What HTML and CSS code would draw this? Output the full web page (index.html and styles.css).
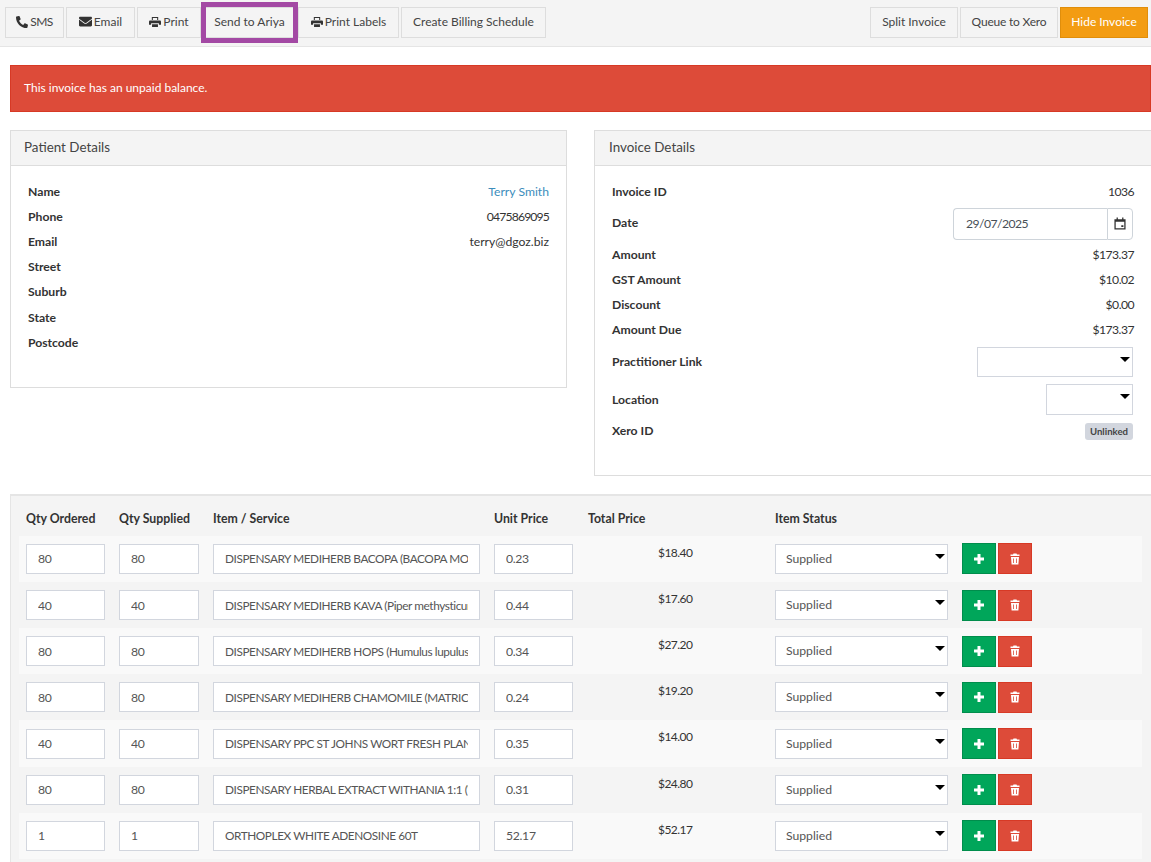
FILE: index.html
```html
<!DOCTYPE html>
<html lang="en">
<head>
<meta charset="utf-8">
<title>Invoice</title>
<link rel="stylesheet" href="styles.css">
</head>
<body>
<header class="toolbar">
  <div class="btn-group">
    <button class="btn w-59"><svg class="ico" viewBox="0 0 512 512"><path d="M18.6 24.6l104-24c11.3-2.6 22.9 3.3 27.5 13.9l48 112c4.2 9.8 1.4 21.3-6.9 28l-60.6 49.6c36 76.7 98.9 140.5 177.2 177.2l49.6-60.6c6.8-8.3 18.2-11.1 28-6.9l112 48c10.7 4.6 16.6 16.2 14 27.5l-24 104c-2.5 10.8-12.1 18.6-23.4 18.6C208 512 0 304.5 0 48c0-11.2 7.7-20.9 18.6-23.4z"/></svg>SMS</button>
    <button class="btn w-69"><svg class="ico ico-wide" viewBox="0 0 512 512"><path d="M502.3 190.8c3.9-3.1 9.7-.2 9.7 4.7V400c0 26.5-21.5 48-48 48H48c-26.5 0-48-21.5-48-48V195.6c0-5 5.7-7.8 9.7-4.7 22.4 17.4 52.1 39.5 154.1 113.6 21.1 15.4 56.7 47.8 92.2 47.6 35.7.3 72-32.8 92.3-47.6 102-74.1 131.600-96.3 154-113.700zM256 320c23.2.4 56.6-29.2 73.4-41.4 132.7-96.3 142.8-104.7 173.4-128.7 5.8-4.5 9.2-11.5 9.2-18.9v-19c0-26.5-21.5-48-48-48H48C21.5 64 0 85.5 0 112v19c0 7.4 3.4 14.3 9.2 18.9 30.6 23.9 40.7 32.4 173.4 128.7 16.8 12.2 50.2 41.8 73.4 41.4z"/></svg>Email</button>
    <button class="btn w-64"><svg class="ico" viewBox="0 0 512 512"><path d="M120 40h272v130h-44V84H164v86h-44zM50 190h412c28 0 50 22 50 50v130h-90v-60H90v60H0V240c0-28 22-50 50-50zM130 350h252v122H130z"/></svg>Print</button>
    <button class="btn btn-marked w-93">Send to Ariya</button>
    <button class="btn w-101"><svg class="ico" viewBox="0 0 512 512"><path d="M120 40h272v130h-44V84H164v86h-44zM50 190h412c28 0 50 22 50 50v130h-90v-60H90v60H0V240c0-28 22-50 50-50zM130 350h252v122H130z"/></svg>Print Labels</button>
    <button class="btn w-145">Create Billing Schedule</button>
  </div>
  <div class="btn-group">
    <button class="btn w-88">Split Invoice</button>
    <button class="btn w-98">Queue to Xero</button>
    <button class="btn btn-orange w-88">Hide Invoice</button>
  </div>
</header>

<div class="alert">This invoice has an unpaid balance.</div>

<div class="panels">
  <section class="panel panel-patient">
    <h2 class="panel-title">Patient Details</h2>
    <dl class="details">
      <div class="row"><dt>Name</dt><dd><a class="link" href="#">Terry Smith</a></dd></div>
      <div class="row"><dt>Phone</dt><dd class="num-tight">0475869095</dd></div>
      <div class="row"><dt>Email</dt><dd>terry@dgoz.biz</dd></div>
      <div class="row"><dt>Street</dt><dd></dd></div>
      <div class="row"><dt>Suburb</dt><dd></dd></div>
      <div class="row"><dt>State</dt><dd></dd></div>
      <div class="row"><dt>Postcode</dt><dd></dd></div>
    </dl>
  </section>
  <section class="panel panel-invoice">
    <h2 class="panel-title">Invoice Details</h2>
    <dl class="details">
      <div class="row"><dt>Invoice ID</dt><dd class="num">1036</dd></div>
      <div class="row row-date"><dt>Date</dt><dd class="date-field"><input class="date-input num" value="29/07/2025"><span class="date-addon"><svg class="cal" viewBox="0 0 14 14"><path d="M3 0h1.5v2h5V0H11v2h2.500v12H.5V2H3zM2 5v7.500h10V5zm6.500 4H11v2H8.500z" fill-rule="evenodd"/></svg></span></dd></div>
      <div class="row"><dt>Amount</dt><dd class="num">$173.37</dd></div>
      <div class="row"><dt>GST Amount</dt><dd class="num">$10.02</dd></div>
      <div class="row"><dt>Discount</dt><dd class="num">$0.00</dd></div>
      <div class="row"><dt>Amount Due</dt><dd class="num">$173.37</dd></div>
      <div class="row row-select row-first-select"><dt>Practitioner Link</dt><dd><span class="select-wrap sel-prac"><select class="select"><option></option></select></span></dd></div>
      <div class="row row-select"><dt>Location</dt><dd><span class="select-wrap sel-loc"><select class="select"><option></option></select></span></dd></div>
      <div class="row row-xero"><dt>Xero ID</dt><dd><span class="badge">Unlinked</span></dd></div>
    </dl>
  </section>
</div>

<section class="items">
  <table class="items-table">
    <thead>
      <tr><th class="c-qty">Qty Ordered</th><th class="c-qty2">Qty Supplied</th><th class="c-item">Item / Service</th><th class="c-unit">Unit Price</th><th class="c-total">Total Price</th><th class="c-status">Item Status</th><th class="c-act"></th></tr>
    </thead>
    <tbody>
      <tr><td><input class="input num" value="80"></td><td><input class="input num" value="80"></td><td><input class="input input-item" value="DISPENSARY MEDIHERB BACOPA (BACOPA MONNIERI) 1:2"></td><td class="unit"><input class="input num" value="0.23"></td><td class="total num">$18.40</td><td><span class="select-wrap"><select class="select select-status"><option>Supplied</option></select></span></td><td class="actions"><button class="act act-add"><svg class="act-ico" viewBox="0 0 12 12"><path d="M4.500 1h3v3.500H11v3H7.500V11h-3V7.500H1v-3h3.500z"/></svg></button><button class="act act-del"><svg class="act-ico" viewBox="0 0 12 12"><path fill-rule="evenodd" d="M4.500.5h3l.5 1h2.500v1.500h-9V1.500H4zM2 4h8l-.6 7.500H2.600zM4 5.500v4.500h.8V5.500zm3.200 0v4.500H8V5.500z"/></svg></button></td></tr>
      <tr><td><input class="input num" value="40"></td><td><input class="input num" value="40"></td><td><input class="input input-item" value="DISPENSARY MEDIHERB KAVA (Piper methysticum) 1:2"></td><td class="unit"><input class="input num" value="0.44"></td><td class="total num">$17.60</td><td><span class="select-wrap"><select class="select select-status"><option>Supplied</option></select></span></td><td class="actions"><button class="act act-add"><svg class="act-ico" viewBox="0 0 12 12"><path d="M4.500 1h3v3.500H11v3H7.500V11h-3V7.500H1v-3h3.500z"/></svg></button><button class="act act-del"><svg class="act-ico" viewBox="0 0 12 12"><path fill-rule="evenodd" d="M4.500.5h3l.5 1h2.500v1.500h-9V1.500H4zM2 4h8l-.6 7.500H2.600zM4 5.500v4.500h.8V5.500zm3.200 0v4.500H8V5.500z"/></svg></button></td></tr>
      <tr><td><input class="input num" value="80"></td><td><input class="input num" value="80"></td><td><input class="input input-item" value="DISPENSARY MEDIHERB HOPS (Humulus lupulus) 1:2"></td><td class="unit"><input class="input num" value="0.34"></td><td class="total num">$27.20</td><td><span class="select-wrap"><select class="select select-status"><option>Supplied</option></select></span></td><td class="actions"><button class="act act-add"><svg class="act-ico" viewBox="0 0 12 12"><path d="M4.500 1h3v3.500H11v3H7.500V11h-3V7.500H1v-3h3.500z"/></svg></button><button class="act act-del"><svg class="act-ico" viewBox="0 0 12 12"><path fill-rule="evenodd" d="M4.500.5h3l.5 1h2.500v1.500h-9V1.500H4zM2 4h8l-.6 7.500H2.600zM4 5.500v4.500h.8V5.500zm3.200 0v4.500H8V5.500z"/></svg></button></td></tr>
      <tr><td><input class="input num" value="80"></td><td><input class="input num" value="80"></td><td><input class="input input-item" value="DISPENSARY MEDIHERB CHAMOMILE (MATRICARIA RECUTITA)"></td><td class="unit"><input class="input num" value="0.24"></td><td class="total num">$19.20</td><td><span class="select-wrap"><select class="select select-status"><option>Supplied</option></select></span></td><td class="actions"><button class="act act-add"><svg class="act-ico" viewBox="0 0 12 12"><path d="M4.500 1h3v3.500H11v3H7.500V11h-3V7.500H1v-3h3.500z"/></svg></button><button class="act act-del"><svg class="act-ico" viewBox="0 0 12 12"><path fill-rule="evenodd" d="M4.500.5h3l.5 1h2.500v1.500h-9V1.500H4zM2 4h8l-.6 7.500H2.600zM4 5.500v4.500h.8V5.500zm3.200 0v4.500H8V5.500z"/></svg></button></td></tr>
      <tr><td><input class="input num" value="40"></td><td><input class="input num" value="40"></td><td><input class="input input-item" value="DISPENSARY PPC ST JOHNS WORT FRESH PLANT 1:2"></td><td class="unit"><input class="input num" value="0.35"></td><td class="total num">$14.00</td><td><span class="select-wrap"><select class="select select-status"><option>Supplied</option></select></span></td><td class="actions"><button class="act act-add"><svg class="act-ico" viewBox="0 0 12 12"><path d="M4.500 1h3v3.500H11v3H7.500V11h-3V7.500H1v-3h3.500z"/></svg></button><button class="act act-del"><svg class="act-ico" viewBox="0 0 12 12"><path fill-rule="evenodd" d="M4.500.5h3l.5 1h2.500v1.500h-9V1.500H4zM2 4h8l-.6 7.500H2.600zM4 5.500v4.500h.8V5.500zm3.200 0v4.500H8V5.500z"/></svg></button></td></tr>
      <tr><td><input class="input num" value="80"></td><td><input class="input num" value="80"></td><td><input class="input input-item" value="DISPENSARY HERBAL EXTRACT WITHANIA 1:1 (Withania)"></td><td class="unit"><input class="input num" value="0.31"></td><td class="total num">$24.80</td><td><span class="select-wrap"><select class="select select-status"><option>Supplied</option></select></span></td><td class="actions"><button class="act act-add"><svg class="act-ico" viewBox="0 0 12 12"><path d="M4.500 1h3v3.500H11v3H7.500V11h-3V7.500H1v-3h3.500z"/></svg></button><button class="act act-del"><svg class="act-ico" viewBox="0 0 12 12"><path fill-rule="evenodd" d="M4.500.5h3l.5 1h2.500v1.500h-9V1.500H4zM2 4h8l-.6 7.500H2.600zM4 5.500v4.500h.8V5.500zm3.200 0v4.500H8V5.500z"/></svg></button></td></tr>
      <tr><td><input class="input num" value="1"></td><td><input class="input num" value="1"></td><td><input class="input input-item" value="ORTHOPLEX WHITE ADENOSINE 60T"></td><td class="unit"><input class="input num" value="52.17"></td><td class="total num">$52.17</td><td><span class="select-wrap"><select class="select select-status"><option>Supplied</option></select></span></td><td class="actions"><button class="act act-add"><svg class="act-ico" viewBox="0 0 12 12"><path d="M4.500 1h3v3.500H11v3H7.500V11h-3V7.500H1v-3h3.500z"/></svg></button><button class="act act-del"><svg class="act-ico" viewBox="0 0 12 12"><path fill-rule="evenodd" d="M4.500.5h3l.5 1h2.500v1.500h-9V1.500H4zM2 4h8l-.6 7.500H2.600zM4 5.500v4.500h.8V5.500zm3.200 0v4.500H8V5.500z"/></svg></button></td></tr>
    </tbody>
  </table>
</section>
</body>
</html>
```
FILE: styles.css
```css
* { box-sizing: border-box; }
html, body { margin: 0; padding: 0; height: 862px; overflow: hidden; background: #fff; }
body { font-family: "Lato", "Noto Sans", sans-serif; font-size: 12.2px; color: #333; }

.toolbar { display: flex; justify-content: space-between; height: 47px; padding: 7px 3px 0 5px; background: #f4f4f4; border-bottom: 1px solid #e5e5e5; }
.btn-group { display: flex; gap: 2px; align-items: flex-start; }
.btn { display: inline-flex; align-items: center; justify-content: center; height: 31px; padding: 0 0 2px; border: 1px solid #ddd; background: #f4f4f4; color: #444; font: inherit; font-size: 12px; white-space: nowrap; }
.w-59 { width: 59px; letter-spacing: -0.5px; }
.w-64 { width: 64px; }
.w-69 { width: 69px; }
.w-88 { width: 88px; }
.w-93 { width: 93px; }
.w-98 { width: 98px; letter-spacing: -0.2px; }
.w-101 { width: 101px; }
.w-145 { width: 145px; }
.btn-marked { position: relative; }
.btn-marked::after { content: ""; position: absolute; left: -3px; right: -3px; top: -6px; bottom: -6px; border: 5px solid #a349a4; pointer-events: none; }
.btn-orange { background: #f39c12; border-color: #e08e0b; color: #fff; }
.ico { width: 12px; height: 12px; margin-right: 2px; fill: #333; }
.ico-wide { width: 13px; height: 13px; }
.num { letter-spacing: -0.55px; }
.num-tight { letter-spacing: -0.85px; }

.alert { height: 47px; margin: 18px 0 18px 10px; padding: 0 13px 2px; display: flex; align-items: center; background: #dd4b39; border: 1px solid #d73925; color: #fff; font-size: 12px; }

.panels { display: flex; align-items: flex-start; margin-left: 10px; gap: 27px; }
.panel { border: 1px solid #ddd; background: #fff; flex: none; }
.panel-patient { width: 557px; height: 258px; }
.panel-invoice { width: 570px; height: 346px; }
.panel-title { margin: 0; height: 35px; padding: 0 13px 3px; display: flex; align-items: center; background: #f4f4f4; border-bottom: 1px solid #ddd; font-size: 13.4px; font-weight: 400; color: #444; }
.panel-invoice .panel-title { padding-left: 14px; }

.details { margin: 0; padding: 13px 17px 0; }
.panel-invoice .details { width: 556px; }
.row { display: flex; justify-content: space-between; align-items: center; height: 25.100px; }
dt { font-weight: 700; color: #333; }
dd { margin: 0; }
.link { color: #3c8dbc; text-decoration: none; }
.row-date { height: 38px; }
.row-date dt { padding-bottom: 2px; }
.date-field { display: flex; width: 180px; height: 32px; margin: 1px 1px 0 0; }
.date-input { flex: 1; min-width: 0; height: 100%; padding: 0 12px; border: 1px solid #ced4da; border-right: 0; border-radius: 4px 0 0 4px; font: inherit; letter-spacing: -0.55px; color: #495057; background: #fff; }
.date-addon { width: 26px; height: 100%; display: flex; align-items: center; justify-content: center; border: 1px solid #ced4da; border-radius: 0 4px 4px 0; background: #fff; }
.cal { width: 12px; height: 13px; fill: #333; }
.row-select { height: 38px; }
.row-first-select { height: 38.500px; }
.row-xero { height: 23px; }
.select-wrap { position: relative; display: block; }
.select-wrap::after { content: ""; position: absolute; right: 3px; top: 10px; border-left: 5px solid transparent; border-right: 5px solid transparent; border-top: 5px solid #000; pointer-events: none; }
.select { display: block; width: 100%; height: 100%; appearance: none; -webkit-appearance: none; border: 1px solid #d2d6de; border-radius: 0; background: #fff; font: inherit; color: #555; padding: 0 10px 1px; outline: 0; }
.sel-prac { width: 156px; height: 30px; margin-right: 1px; }
.sel-loc { width: 87px; height: 31px; margin-right: 1px; }
.badge { display: inline-block; height: 17px; line-height: 17px; padding: 0 5px; border-radius: 3px; background: #d2d6de; color: #444; font-size: 9.6px; font-weight: 700; margin: 3px 1px 0 0; }

.items { margin: 18px 0 0 10px; height: 400px; padding: 0 8px; background: #f4f4f4; border-top: 2px solid #e5e5e5; border-left: 1px solid #e5e5e5; }
.items-table { border-collapse: collapse; table-layout: fixed; width: 1123px; }
.items-table th { height: 39.800px; padding: 6px 7px 0; text-align: left; font-size: 12.3px; font-weight: 700; white-space: nowrap; vertical-align: middle; color: #333; }
.items-table td { height: 46.170px; padding: 0 7px; vertical-align: middle; }
.items-table tbody tr:nth-child(odd) { background: #f9f9f9; }
.c-qty { width: 93px; }
.c-qty2 { width: 94px; }
.c-item { width: 281px; }
.c-unit { width: 94px; }
.c-total { width: 187px; }
.c-status { width: 187px; }
.c-act { width: auto; }
.items-table td.unit { padding-right: 8px; }
.input { display: block; width: 100%; height: 30px; padding: 0 11px; border: 1px solid #d2d6de; background: #fff; font: inherit; color: #555; border-radius: 0; outline: 0; }
.input.num { letter-spacing: -0.3px; }
.input-item { font-size: 11.8px; letter-spacing: -0.42px; }
.items-table td.total { padding-left: 77px; padding-right: 0; vertical-align: top; padding-top: 9px; font-size: 12px; color: #333; }
.items-table td .select-wrap { height: 30px; }
.select-status { color: #555; }
.actions { white-space: nowrap; font-size: 0; }
.act { display: inline-flex; align-items: center; justify-content: center; width: 34px; height: 31px; padding: 0; margin-right: 2px; border: 1px solid; vertical-align: middle; }
.act-add { background: #00a65a; border-color: #008d4c; }
.act-del { background: #dd4b39; border-color: #d73925; }
.act-ico { width: 12px; height: 12px; fill: #fff; }
```
